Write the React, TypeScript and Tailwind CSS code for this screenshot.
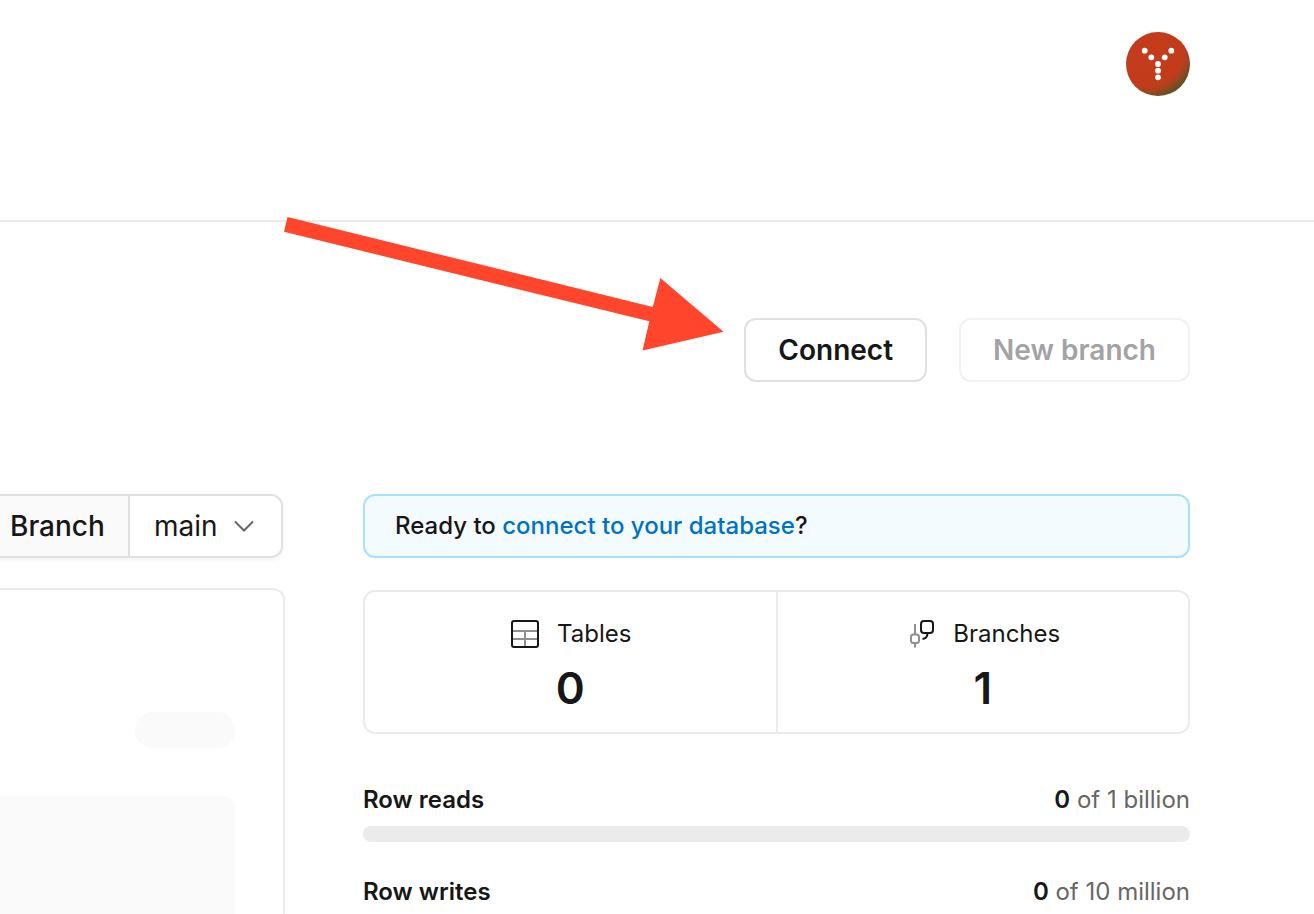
import React from "react";

function Avatar() {
  return (
    <svg viewBox="0 0 64 64" className="size-16" role="img" aria-label="Account">
      <defs>
        <radialGradient id="avatar-fill" gradientUnits="userSpaceOnUse" cx="20" cy="16" r="52">
          <stop offset="0" stopColor="#c43b1b" />
          <stop offset="0.75" stopColor="#c13c1b" />
          <stop offset="0.87" stopColor="#95481f" />
          <stop offset="1" stopColor="#545324" />
        </radialGradient>
      </defs>
      <circle cx="32" cy="32" r="32" fill="url(#avatar-fill)" />
      <g fill="#fff">
        <circle cx="18.7" cy="18.7" r="2.9" />
        <circle cx="25.3" cy="25.3" r="2.9" />
        <circle cx="45.3" cy="18.7" r="2.9" />
        <circle cx="38.7" cy="25.3" r="2.9" />
        <circle cx="32" cy="32" r="2.9" />
        <circle cx="32" cy="38.7" r="2.9" />
        <circle cx="32" cy="45.3" r="2.9" />
      </g>
    </svg>
  );
}

function TableIcon() {
  return (
    <svg viewBox="0 0 32 32" className="size-8" fill="none" strokeWidth="2" aria-hidden="true">
      <path d="M3 13H29M3 21H29M16 13V28" stroke="#8f8f8f" />
      <rect x="3" y="3" width="26" height="26" rx="2" stroke="#171717" />
    </svg>
  );
}

function BranchIcon() {
  return (
    <svg viewBox="0 0 32 32" className="size-8" fill="none" strokeWidth="2" aria-hidden="true">
      <path d="M10 6V16M10 25V29.500" stroke="#8f8f8f" />
      <rect x="6" y="16.5" width="8" height="8.500" rx="2.5" stroke="#8f8f8f" />
      <rect x="16" y="3" width="12" height="12" rx="3" stroke="#171717" />
      <path d="M22.500 15C22.500 18.500 21 20.500 17.500 21" stroke="#171717" />
    </svg>
  );
}

function Stat({ icon, label, value }: { icon: React.ReactNode; label: string; value: string }) {
  return (
    <div className="flex flex-1 flex-col items-center pt-6 pb-4">
      <div className="flex items-center gap-4">
        {icon}
        <span className="leading-9">{label}</span>
      </div>
      <div className="mt-2 text-[44px] leading-14 font-semibold">{value}</div>
    </div>
  );
}

function Usage({ label, limit }: { label: string; limit: string }) {
  return (
    <div className="flex flex-col gap-2">
      <div className="flex justify-between leading-9">
        <span className="font-semibold">{label}</span>
        <span className="text-[#666666]">
          <strong className="font-semibold text-[#171717]">0</strong> of {limit}
        </span>
      </div>
      <div className="h-4 rounded-full bg-[#ebebeb]" />
    </div>
  );
}

export default function App() {
  return (
    <div className="relative flex h-screen flex-col overflow-hidden bg-white font-['Inter',sans-serif] text-2xl text-[#171717]">
      <header className="flex shrink-0 justify-end border-b-2 border-[#ebebeb] pt-8 pr-[124px] pb-[124px]">
        <Avatar />
      </header>

      <div className="flex shrink-0 justify-end gap-8 pt-24 pr-[124px] text-[28px] font-semibold">
        <button type="button" className="h-16 rounded-xl border-2 border-[#e0e0e0] px-8 leading-10">
          Connect
        </button>
        <button
          type="button"
          disabled
          className="h-16 rounded-xl border-2 border-[#f2f2f2] px-8 leading-10 text-[#a3a3a3]"
        >
          New branch
        </button>
      </div>

      <main className="flex min-h-0 flex-1 gap-[78px] pt-28 pr-[124px]">
        <div className="flex w-[285px] shrink-0 flex-col">
          <div className="mr-[2px] flex h-16 shrink-0 overflow-hidden rounded-r-xl border-2 border-l-0 border-[#e0e0e0] text-[28px] shadow-[0_2px_4px_rgba(0,0,0,0.05)]">
            <label
              htmlFor="branch"
              className="flex w-[130px] items-center border-r-2 border-[#e0e0e0] bg-[#fafafa] pt-[2px] pl-[10px] font-medium"
            >
              Branch
            </label>
            <div className="relative flex-1">
              <select id="branch" className="h-full w-full appearance-none bg-white pt-[2px] pl-6">
                <option>main</option>
              </select>
              <svg
                viewBox="0 0 24 24"
                className="pointer-events-none absolute inset-y-0 right-[25px] my-auto size-6"
                fill="none"
                stroke="#666666"
                strokeWidth="2"
                aria-hidden="true"
              >
                <path d="M3 7.500L12 16.500L21 7.500" />
              </svg>
            </div>
          </div>

          <div className="mt-[30px] flex flex-1 flex-col items-end rounded-tr-xl border-t-2 border-r-2 border-[#ebebeb] pt-[122px] pr-12 shadow-[0_2px_4px_rgba(0,0,0,0.04)]">
            <div className="h-9 w-[100px] shrink-0 rounded-full bg-[#fafafa]" />
            <div className="mt-12 w-full flex-1 rounded-tr-xl bg-[#fafafa]" />
          </div>
        </div>

        <div className="min-w-0 flex-1">
          <p className="flex h-16 items-center rounded-xl border-2 border-[#a9e0fb] bg-[#f4fbff] px-[30px] font-medium">
            <span>
              Ready to{" "}
              <a href="#connect" className="text-[#0072c6]">
                connect to your database
              </a>
              ?
            </span>
          </p>

          <div className="mt-8 flex divide-x-2 divide-[#ebebeb] rounded-xl border-2 border-[#ebebeb]">
            <Stat icon={<TableIcon />} label="Tables" value="0" />
            <Stat icon={<BranchIcon />} label="Branches" value="1" />
          </div>

          <div className="mt-12 flex flex-col gap-8">
            <Usage label="Row reads" limit="1 billion" />
            <Usage label="Row writes" limit="10 million" />
          </div>
        </div>
      </main>

      <svg
        viewBox="0 0 440 134"
        className="pointer-events-none absolute top-[217px] left-[284px] h-[134px] w-[440px]"
        aria-hidden="true"
      >
        <path
          d="M3.500 0L368.800 90L376.300 61L439.500 114.700L358.500 133.500L365.300 104.300L0 14.800Z"
          fill="#ff452b"
        />
      </svg>
    </div>
  );
}
